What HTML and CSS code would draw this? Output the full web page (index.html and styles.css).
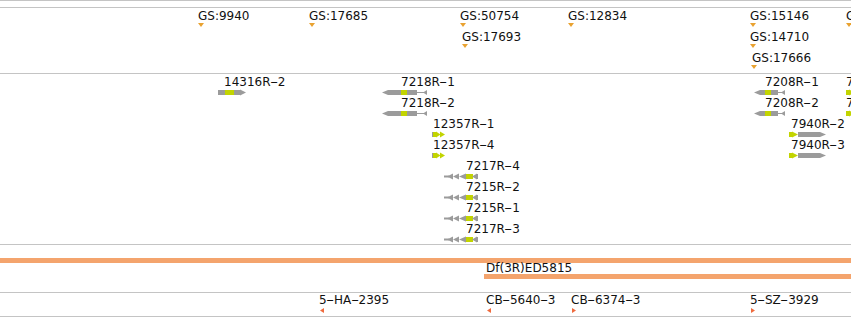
FILE: index.html
```html
<!DOCTYPE html>
<html>
<head>
  <meta charset="utf-8"/>
  <title>Region details</title>
  <link rel="stylesheet" href="styles.css">
</head>
<body>
  <!-- transcript glyph shapes, reused by every track row -->
  <svg class="sprites" xmlns="http://www.w3.org/2000/svg">
    <symbol id="tx14316" viewBox="0 0 28 7">
      <rect x="0" y="1" width="7" height="5" fill="#9b9b9b"/>
      <rect x="7" y="1" width="9" height="5" fill="#c2d400"/>
      <rect x="16" y="1" width="6" height="5" fill="#9b9b9b"/>
      <polygon points="22,0.5 28,3.5 22,6.5" fill="#9b9b9b"/>
    </symbol>
    <symbol id="tx7218" viewBox="0 0 45 7">
      <polygon points="0,3.5 6,1 19,1 19,6 6,6" fill="#9b9b9b"/>
      <rect x="19" y="1" width="6" height="5" fill="#c2d400"/>
      <rect x="25" y="1" width="10" height="5" fill="#9b9b9b"/>
      <rect x="35" y="3" width="7" height="1" fill="#9b9b9b"/>
      <polygon points="41,3.5 45,1 45,6" fill="#9b9b9b"/>
    </symbol>
    <symbol id="tx7208" viewBox="0 0 31 7">
      <polygon points="0,3.5 6,1 11,1 11,6 6,6" fill="#9b9b9b"/>
      <rect x="11" y="1" width="6" height="5" fill="#c2d400"/>
      <rect x="17" y="1" width="7" height="5" fill="#9b9b9b"/>
      <rect x="24" y="3" width="4" height="1" fill="#9b9b9b"/>
      <polygon points="27,3.5 31,1 31,6" fill="#9b9b9b"/>
    </symbol>
    <symbol id="tx7940" viewBox="0 0 37 7">
      <rect x="9" y="1" width="22" height="5" fill="#9b9b9b"/>
      <polygon points="31,1 37,3.5 31,6" fill="#9b9b9b"/>
      <rect x="0" y="1" width="3" height="5" fill="#c2d400"/>
      <polygon points="3,0.5 9,3.5 3,6.5" fill="#c2d400"/>
    </symbol>
    <symbol id="tx12357" viewBox="0 0 13 7">
      <rect x="0" y="1" width="1" height="5" fill="#9b9b9b"/>
      <rect x="1" y="1" width="3" height="5" fill="#c2d400"/>
      <polygon points="4,0.5 8.5,3.5 4,6.5" fill="#c2d400"/>
      <polygon points="8,0.5 13,3.5 8,6.5" fill="#c2d400"/>
    </symbol>
    <symbol id="tx7217" viewBox="0 0 34 7">
      <rect x="0" y="2.5" width="5" height="2" fill="#9b9b9b"/>
      <polygon points="3,3.5 9,0.5 9,6.5" fill="#9b9b9b"/>
      <polygon points="9,3.5 15,0.5 15,6.5" fill="#9b9b9b"/>
      <polygon points="15,3.5 22,0.5 22,6.5" fill="#9b9b9b"/>
      <rect x="22" y="1" width="7" height="5" fill="#c2d400"/>
      <polygon points="28,3.5 33,0.5 33,6.5" fill="#9b9b9b"/>
      <rect x="33" y="1" width="1" height="5" fill="#9b9b9b"/>
    </symbol>
  </svg>

  <div class="panel">
    <div class="track track-ruler"></div>

    <!-- insertion sites -->
    <div class="track track-gs">
      <span class="label" style="left:198px;top:2px">GS:9940</span>
      <i class="pin-down" style="left:198px;top:15px"></i>
      <span class="label" style="left:309px;top:2px">GS:17685</span>
      <i class="pin-down" style="left:309px;top:15px"></i>
      <span class="label" style="left:460px;top:2px">GS:50754</span>
      <i class="pin-down" style="left:460px;top:15px"></i>
      <span class="label" style="left:462px;top:23px">GS:17693</span>
      <i class="pin-down" style="left:462px;top:36px"></i>
      <span class="label" style="left:568px;top:2px">GS:12834</span>
      <i class="pin-down" style="left:568px;top:15px"></i>
      <span class="label" style="left:750px;top:2px">GS:15146</span>
      <i class="pin-down" style="left:750px;top:15px"></i>
      <span class="label" style="left:750px;top:23px">GS:14710</span>
      <i class="pin-down" style="left:750px;top:36px"></i>
      <span class="label" style="left:752px;top:44px">GS:17666</span>
      <i class="pin-down" style="left:751px;top:57px"></i>
      <span class="label" style="left:846px;top:2px">GS:15149</span>
      <i class="pin-down" style="left:846px;top:15px"></i>
    </div>

    <!-- transcripts -->
    <div class="track track-genes">
      <span class="label" style="left:224px;top:2px">14316R<span class="dash">-</span>2</span>
      <svg class="glyph" width="28" height="7" style="left:218px;top:15px"><use href="#tx14316"/></svg>
      <span class="label" style="left:401px;top:2px">7218R<span class="dash">-</span>1</span>
      <svg class="glyph" width="45" height="7" style="left:382px;top:15px"><use href="#tx7218"/></svg>
      <span class="label" style="left:765px;top:2px">7208R<span class="dash">-</span>1</span>
      <svg class="glyph" width="31" height="7" style="left:754px;top:15px"><use href="#tx7208"/></svg>
      <span class="label" style="left:846px;top:2px">7941R<span class="dash">-</span>1</span>
      <svg class="glyph" width="37" height="7" style="left:846px;top:15px"><use href="#tx7940"/></svg>

      <span class="label" style="left:401px;top:23px">7218R<span class="dash">-</span>2</span>
      <svg class="glyph" width="45" height="7" style="left:382px;top:36px"><use href="#tx7218"/></svg>
      <span class="label" style="left:765px;top:23px">7208R<span class="dash">-</span>2</span>
      <svg class="glyph" width="31" height="7" style="left:754px;top:36px"><use href="#tx7208"/></svg>
      <span class="label" style="left:846px;top:23px">7941R<span class="dash">-</span>2</span>
      <svg class="glyph" width="37" height="7" style="left:846px;top:36px"><use href="#tx7940"/></svg>

      <span class="label" style="left:433px;top:44px">12357R<span class="dash">-</span>1</span>
      <svg class="glyph" width="13" height="7" style="left:432px;top:57px"><use href="#tx12357"/></svg>
      <span class="label" style="left:791px;top:44px">7940R<span class="dash">-</span>2</span>
      <svg class="glyph" width="37" height="7" style="left:789px;top:57px"><use href="#tx7940"/></svg>

      <span class="label" style="left:433px;top:65px">12357R<span class="dash">-</span>4</span>
      <svg class="glyph" width="13" height="7" style="left:432px;top:78px"><use href="#tx12357"/></svg>
      <span class="label" style="left:791px;top:65px">7940R<span class="dash">-</span>3</span>
      <svg class="glyph" width="37" height="7" style="left:789px;top:78px"><use href="#tx7940"/></svg>

      <span class="label" style="left:466px;top:86px">7217R<span class="dash">-</span>4</span>
      <svg class="glyph" width="34" height="7" style="left:444px;top:99px"><use href="#tx7217"/></svg>
      <span class="label" style="left:466px;top:107px">7215R<span class="dash">-</span>2</span>
      <svg class="glyph" width="34" height="7" style="left:444px;top:120px"><use href="#tx7217"/></svg>
      <span class="label" style="left:466px;top:128px">7215R<span class="dash">-</span>1</span>
      <svg class="glyph" width="34" height="7" style="left:444px;top:141px"><use href="#tx7217"/></svg>
      <span class="label" style="left:466px;top:149px">7217R<span class="dash">-</span>3</span>
      <svg class="glyph" width="34" height="7" style="left:444px;top:162px"><use href="#tx7217"/></svg>
    </div>

    <!-- deficiencies -->
    <div class="track track-df">
      <div class="band" style="left:0;top:13px;width:851px"></div>
      <span class="label" style="left:486px;top:17px">Df(3R)ED5815</span>
      <div class="band" style="left:484px;top:29px;width:367px"></div>
    </div>

    <!-- probes -->
    <div class="track track-probes">
      <span class="label" style="left:319px;top:1px">5<span class="dash">-</span>HA<span class="dash">-</span>2395</span>
      <i class="pin-left" style="left:320px;top:15px"></i>
      <span class="label" style="left:486px;top:1px">CB<span class="dash">-</span>5640<span class="dash">-</span>3</span>
      <i class="pin-left" style="left:487px;top:15px"></i>
      <span class="label" style="left:571px;top:1px">CB<span class="dash">-</span>6374<span class="dash">-</span>3</span>
      <i class="pin-right" style="left:572px;top:15px"></i>
      <span class="label" style="left:750px;top:1px">5<span class="dash">-</span>SZ<span class="dash">-</span>3929</span>
      <i class="pin-right" style="left:751px;top:15px"></i>
    </div>
  </div>
</body>
</html>
```

FILE: styles.css
```css
html {
  background: #fff;
}

body {
  margin: 0;
  padding: 0;
  width: 851px;
  overflow: hidden;
  font-family: 'DejaVu Sans', Verdana, sans-serif;
  font-size: 12px;
  color: #111;
}

.sprites {
  position: absolute;
  width: 0;
  height: 0;
  overflow: hidden;
}

.panel {
  width: 851px;
  border-top: 1px solid #c4c4c4;
}

.track {
  position: relative;
  overflow: hidden;
  border-bottom: 1px solid #c4c4c4;
}

.track-ruler { height: 6px; }
.track-gs { height: 65px; }
.track-genes { height: 170px; }
.track-df { height: 47px; }
.track-probes { height: 23px; }

.label {
  position: absolute;
  line-height: 13px;
  white-space: nowrap;
}

.label .dash {
  display: inline-block;
  margin: 0 1.5px;
  transform: scaleX(1.9);
}

.glyph {
  position: absolute;
  display: block;
}

.pin-down {
  position: absolute;
  width: 6px;
  height: 4px;
  background: #e9a230;
  clip-path: polygon(0 0, 100% 0, 50% 100%);
}

.pin-left,
.pin-right {
  position: absolute;
  width: 4px;
  height: 5px;
  background: #ef6b3e;
}

.pin-left {
  clip-path: polygon(100% 0, 0 50%, 100% 100%);
}

.pin-right {
  clip-path: polygon(0 0, 100% 50%, 0 100%);
}

.band {
  position: absolute;
  height: 5px;
  background: #f4a46d;
}
```
